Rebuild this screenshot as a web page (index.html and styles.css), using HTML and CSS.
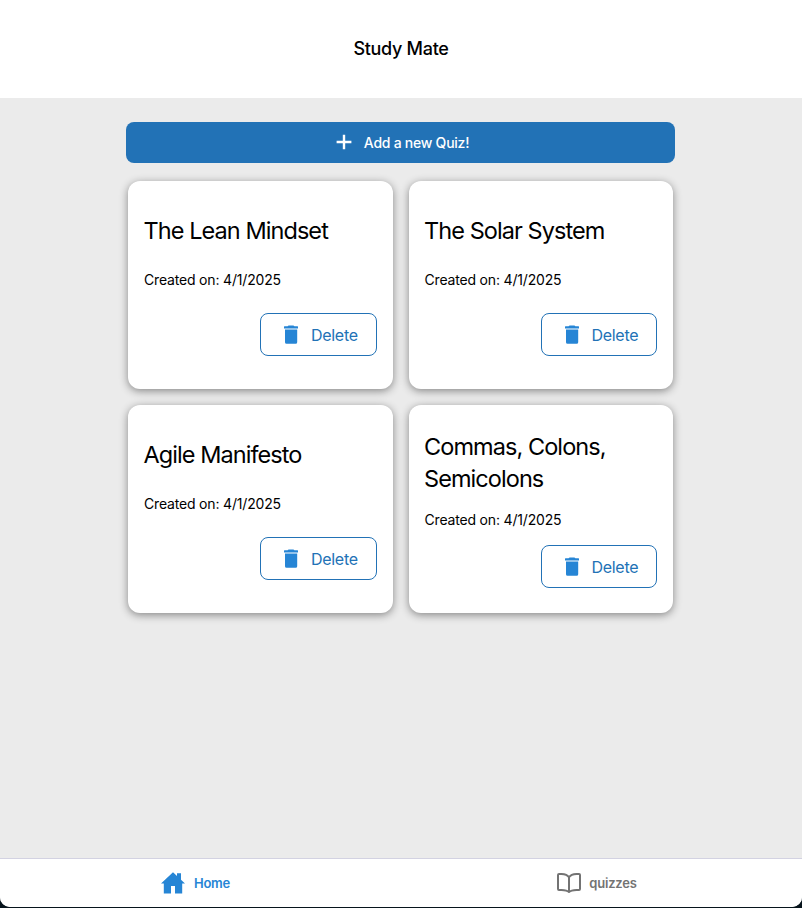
FILE: index.html
```html
<!DOCTYPE html>
<html lang="en">
<head>
<meta charset="utf-8">
<title>Study Mate</title>
<link rel="stylesheet" href="styles.css">
</head>
<body>
<svg class="defs" aria-hidden="true">
  <symbol id="trash" viewBox="0 0 16 20"><path d="M1 1.8Q1 1.3 1.5 1.3H4.6L5.1.8Q5.4.5 5.8.5H10.2Q10.6.5 10.9.8L11.4 1.3H14.5Q15 1.3 15 1.8V3.6H1ZM2 4.5H14.2V17.2Q14.2 18.8 12.6 18.8H3.6Q2 18.8 2 17.2Z"/></symbol>
</svg>
<div class="app">
  <header class="header"><h1>Study Mate</h1></header>
  <main class="main">
    <button class="add"><svg class="plus" viewBox="0 0 16 16"><path d="M8 .8V15.2M.6 8H15.4"/></svg><span>Add a new Quiz!</span></button>
    <section class="grid">
      <article class="card"><h2>The Lean Mindset</h2><p>Created on: 4/1/2025</p><button class="delete"><svg class="trash"><use href="#trash"/></svg><span>Delete</span></button></article>
      <article class="card"><h2>The Solar System</h2><p>Created on: 4/1/2025</p><button class="delete"><svg class="trash"><use href="#trash"/></svg><span>Delete</span></button></article>
      <article class="card"><h2>Agile Manifesto</h2><p>Created on: 4/1/2025</p><button class="delete"><svg class="trash"><use href="#trash"/></svg><span>Delete</span></button></article>
      <article class="card"><h2>Commas, Colons, Semicolons</h2><p>Created on: 4/1/2025</p><button class="delete"><svg class="trash"><use href="#trash"/></svg><span>Delete</span></button></article>
    </section>
  </main>
  <nav class="tabs">
    <a class="tab active"><svg class="home" viewBox="0 0 24 22"><path d="M12 .2L16 4V1.2H20V7.7L24 11.6H21.2V21.6H14V14H10V21.6H2.8V11.6H0Z"/></svg><span>Home</span></a>
    <a class="tab"><svg class="book" viewBox="0 0 26 22"><path d="M13 5.2C11.5 3 9 2.2 5.5 2H3Q2 2 2 3V16.9Q2 17.9 3 17.9H5.5C9 18 11.5 18.6 13 20C14.5 18.6 17 18 20.5 17.9H23Q24 17.9 24 16.9V3Q24 2 23 2H20.5C17 2.2 14.5 3 13 5.2V20"/></svg><span>quizzes</span></a>
  </nav>
</div>
</body>
</html>
```

FILE: styles.css
```css
* { box-sizing: border-box; }
body { margin: 0; background: #07141c; color: #000; font-family: Inter, "Liberation Sans", sans-serif; }
h1, h2, p { margin: 0; font-weight: 400; }
button { font: inherit; margin: 0; padding: 0; }
.defs { display: block; width: 0; height: 0; }
.app { height: 907px; display: flex; flex-direction: column; background: #ebebeb; border-radius: 0 0 10px 10px; overflow: hidden; }
.header { height: 98px; flex: none; background: #fff; display: flex; align-items: center; justify-content: center; }
.header h1 { font-size: 18px; font-weight: 500; letter-spacing: -.3px; line-height: 22px; }
.main { flex: 1; width: 549px; margin: 0 auto; padding-top: 24px; position: relative; left: -.5px; }
.add { width: 100%; height: 41px; display: flex; align-items: center; justify-content: center; padding-left: 4px; border: 0; border-radius: 8px; background: #2272b6; color: #fff; font-size: 14px; font-weight: 500; letter-spacing: -.25px; }
.plus { width: 16px; height: 16px; margin: 0 12px 2px 0; fill: none; stroke: #fff; stroke-width: 2.4; }
.grid { display: grid; grid-template-columns: 1fr 1fr; grid-auto-rows: 208px; gap: 16px; margin: 18px 2px 0; }
.card { display: flex; flex-direction: column; padding: 34px 16px 0; background: #fff; border-radius: 12px; box-shadow: 0 2px 8px rgba(0, 0, 0, .43); }
.card h2 { font-size: 23.5px; line-height: 32px; letter-spacing: -.93px; margin: 0 0 23px -.5px; }
.card p { font-size: 14px; line-height: 20px; letter-spacing: -.18px; margin-bottom: 23px; }
.card:last-child { padding-top: 26px; }
.card:last-child h2 { margin-bottom: 15px; }
.card:last-child p { margin-bottom: 15px; }
.delete { align-self: flex-end; width: 116.5px; height: 43px; display: flex; align-items: center; padding-left: 22px; border: 1px solid #2272b6; border-radius: 8px; background: #fff; color: #2272b6; font-size: 16px; letter-spacing: -.3px; }
.trash { width: 16px; height: 20px; margin-right: 12px; fill: #2685d5; }
.tabs { flex: none; height: 49px; border-top: 1px solid #d3d2e2; display: grid; grid-template-columns: 1fr 1fr; background: #fff; }
.tab { display: flex; align-items: center; justify-content: center; padding-right: 10px; color: #737373; font-size: 13px; font-weight: 600; letter-spacing: -.2px; }
.active { color: #2685d5; }
.home { width: 24px; height: 22px; margin-right: 9px; fill: currentColor; }
.book { width: 26px; height: 22px; margin-right: 7px; fill: none; stroke: currentColor; stroke-width: 2; stroke-linejoin: round; }
```
